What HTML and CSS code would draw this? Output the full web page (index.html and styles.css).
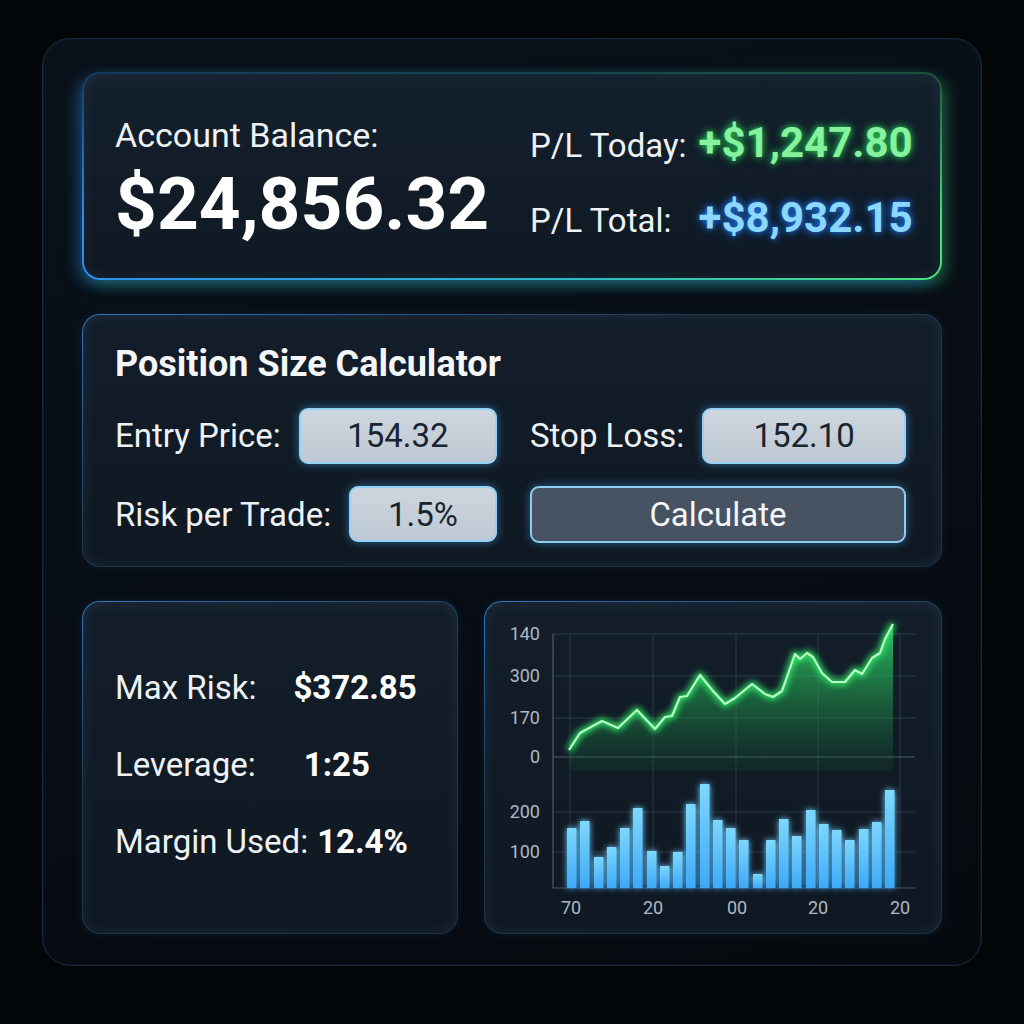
FILE: index.html
```html
<!DOCTYPE html>
<html lang="en">
<head>
    <meta charset="UTF-8">
    <meta name="viewport" content="width=device-width, initial-scale=1.0">
    <title>Trading Dashboard</title>
    <link rel="stylesheet" href="styles.css">
</head>
<body>
    <main class="dashboard">
        <!-- Saldo y P/L -->
        <section class="card balance-card">
            <div class="balance">
                <div class="balance-label">Account Balance:</div>
                <div class="balance-value">$24,856.32</div>
            </div>
            <dl class="pl">
                <dt>P/L Today:</dt>
                <dd class="pl-today">+$1,247.80</dd>
                <dt>P/L Total:</dt>
                <dd class="pl-total">+$8,932.15</dd>
            </dl>
        </section>

        <!-- Calculadora -->
        <section class="card calc-card">
            <h2 class="calc-title">Position Size Calculator</h2>
            <form class="calc-grid" id="calcForm">
                <label class="field">
                    <span>Entry Price:</span>
                    <input type="text" id="entryPrice" value="154.32">
                </label>
                <label class="field">
                    <span>Stop Loss:</span>
                    <input type="text" id="stopLoss" value="152.10">
                </label>
                <label class="field">
                    <span>Risk per Trade:</span>
                    <input type="text" id="riskPct" value="1.5%">
                </label>
                <button type="button" class="calc-btn">Calculate</button>
            </form>
        </section>

        <div class="bottom-row">
            <section class="card stats-card">
                <div class="stat"><span>Max Risk:</span><strong class="gap-risk">$372.85</strong></div>
                <div class="stat"><span>Leverage:</span><strong class="gap-lev">1:25</strong></div>
                <div class="stat"><span>Margin Used:</span><strong class="gap-margin">12.4%</strong></div>
            </section>

            <section class="card chart-card">
                <svg class="chart" viewBox="0 0 458 334" width="458" height="334">
                    <defs>
                        <filter id="blur" x="-20%" y="-20%" width="140%" height="140%">
                            <feGaussianBlur stdDeviation="3"/>
                        </filter>
                        <filter id="glow" x="-20%" y="-20%" width="140%" height="140%">
                            <feGaussianBlur stdDeviation="3" result="b"/>
                            <feMerge><feMergeNode in="b"/><feMergeNode in="SourceGraphic"/></feMerge>
                        </filter>
                        <linearGradient id="areaFill" gradientUnits="userSpaceOnUse" x1="0" y1="20" x2="0" y2="172">
                            <stop offset="0" stop-color="#2fd066" stop-opacity="0.95"/>
                            <stop offset="1" stop-color="#147038" stop-opacity="0.12"/>
                        </linearGradient>
                        <linearGradient id="barFill" x1="0" y1="0" x2="0" y2="1">
                            <stop offset="0" stop-color="#7dd8ff"/>
                            <stop offset="1" stop-color="#3ea9f7"/>
                        </linearGradient>
                    </defs>

                    <!-- rejilla -->
                    <g class="grid">
                        <line x1="69" y1="33" x2="431" y2="33"/>
                        <line x1="69" y1="75" x2="431" y2="75"/>
                        <line x1="69" y1="117" x2="431" y2="117"/>
                        <line x1="69" y1="211" x2="431" y2="211"/>
                        <line x1="69" y1="251" x2="431" y2="251"/>
                        <line x1="86" y1="33" x2="86" y2="287"/>
                        <line x1="169" y1="33" x2="169" y2="287"/>
                        <line x1="252" y1="33" x2="252" y2="287"/>
                        <line x1="334" y1="33" x2="334" y2="287"/>
                        <line x1="416" y1="33" x2="416" y2="287"/>
                    </g>
                    <g class="axis">
                        <line x1="69" y1="33" x2="69" y2="287"/>
                        <line x1="69" y1="156" x2="431" y2="156"/>
                        <line x1="69" y1="287" x2="431" y2="287"/>
                    </g>

                    <g class="labels y-labels">
                        <text x="56" y="39">140</text>
                        <text x="56" y="81">300</text>
                        <text x="56" y="123">170</text>
                        <text x="56" y="162">0</text>
                        <text x="56" y="217">200</text>
                        <text x="56" y="257">100</text>
                    </g>
                    <g class="labels x-labels">
                        <text x="87" y="313">70</text>
                        <text x="169" y="313">20</text>
                        <text x="253" y="313">00</text>
                        <text x="334" y="313">20</text>
                        <text x="416" y="313">20</text>
                    </g>

                    <!-- linea de equity -->
                    <polygon fill="url(#areaFill)" points="85,149 96,132 118,120 134,127 153,109 171,128 181,116 188,115 196,96 203,95 216,74 229,90 241,103 251,97 268,83 281,93 289,96 298,90 311,53 316,58 323,52 329,56 338,72 348,81 361,81 371,69 378,73 388,57 396,52 401,38 409,23 409,170 85,170"/>
                    <polyline class="line-glow" filter="url(#blur)" points="85,149 96,132 118,120 134,127 153,109 171,128 181,116 188,115 196,96 203,95 216,74 229,90 241,103 251,97 268,83 281,93 289,96 298,90 311,53 316,58 323,52 329,56 338,72 348,81 361,81 371,69 378,73 388,57 396,52 401,38 409,23"/>
                    <polyline class="line" points="85,149 96,132 118,120 134,127 153,109 171,128 181,116 188,115 196,96 203,95 216,74 229,90 241,103 251,97 268,83 281,93 289,96 298,90 311,53 316,58 323,52 329,56 338,72 348,81 361,81 371,69 378,73 388,57 396,52 401,38 409,23"/>

                    <!-- volumen -->
                    <g class="bars" fill="url(#barFill)" filter="url(#glow)">
                        <rect x="83" y="227" width="9.5" height="60"/>
                        <rect x="96" y="220" width="9.5" height="67"/>
                        <rect x="110" y="256" width="9.5" height="31"/>
                        <rect x="123" y="246" width="9.5" height="41"/>
                        <rect x="136" y="227" width="9.5" height="60"/>
                        <rect x="149" y="207" width="9.5" height="80"/>
                        <rect x="163" y="250" width="9.5" height="37"/>
                        <rect x="176" y="265" width="9.5" height="22"/>
                        <rect x="189" y="251" width="9.5" height="36"/>
                        <rect x="202" y="203" width="9.5" height="84"/>
                        <rect x="216" y="183" width="9.5" height="104"/>
                        <rect x="229" y="219" width="9.5" height="68"/>
                        <rect x="242" y="227" width="9.5" height="60"/>
                        <rect x="255" y="239" width="9.5" height="48"/>
                        <rect x="269" y="273" width="9.5" height="14"/>
                        <rect x="282" y="239" width="9.5" height="48"/>
                        <rect x="295" y="218" width="9.5" height="69"/>
                        <rect x="308" y="235" width="9.5" height="52"/>
                        <rect x="322" y="209" width="9.5" height="78"/>
                        <rect x="335" y="223" width="9.5" height="64"/>
                        <rect x="348" y="229" width="9.5" height="58"/>
                        <rect x="361" y="239" width="9.5" height="48"/>
                        <rect x="375" y="228" width="9.5" height="59"/>
                        <rect x="388" y="221" width="9.5" height="66"/>
                        <rect x="401" y="189" width="9.5" height="98"/>
                    </g>
                </svg>
            </section>
        </div>
    </main>
</body>
</html>
```

FILE: styles.css
```css
* {
    box-sizing: border-box;
}
body {
    margin: 0;
    padding: 38px 42px;
    background-color: #030609;
    font-family: Roboto, "Liberation Sans", Arial, sans-serif;
    color: #f1f4f7;
}

/* marco principal */
.dashboard {
    width: 940px;
    height: 928px;
    padding: 33px 39px 31px;
    border: 1px solid #172a3c;
    border-radius: 28px;
    background: linear-gradient(160deg, #0a1119, #060a0f);
    box-shadow: inset 0 0 0 1px rgba(40, 90, 140, 0.12);
    display: flex;
    flex-direction: column;
    gap: 34px;
}
.card {
    border: 1.5px solid transparent;
    border-radius: 18px;
    background:
        linear-gradient(180deg, #131e2a, #0f1822) padding-box,
        linear-gradient(160deg, #2f78bf, rgba(80, 130, 180, 0.35) 40%, rgba(80, 130, 180, 0.3)) border-box;
    box-shadow: inset 0 0 14px rgba(120, 170, 220, 0.12), 0 0 8px rgba(30, 80, 130, 0.2);
}

/* saldo */
.balance-card {
    height: 210px;
    padding: 41px 0 0 31px;
    display: grid;
    grid-template-columns: 415px auto;
    align-items: start;
    border: 2px solid transparent;
    background:
        linear-gradient(180deg, #14202d, #0f1923) padding-box,
        linear-gradient(180deg, rgba(12, 20, 29, 0.7), rgba(12, 20, 29, 0) 70%) border-box,
        linear-gradient(90deg, #2c8ff0, #2fb6c8 55%, #48e07a) border-box;
    box-shadow: inset 0 0 14px rgba(120, 170, 220, 0.1), -6px 5px 14px rgba(40, 140, 255, 0.35), 6px 5px 14px rgba(60, 220, 110, 0.3);
}
.balance-label {
    font-size: 34px;
    color: #eef2f5;
}
.balance-value {
    margin-top: 6px;
    font-size: 73px;
    font-weight: 700;
    color: #ffffff;
}
.pl {
    margin: 3px 0 0;
    display: grid;
    grid-template-columns: max-content max-content;
    justify-content: start;
    column-gap: 12px;
    row-gap: 26px;
    align-items: baseline;
}
.pl dt {
    font-size: 33px;
    color: #eef2f5;
}
.pl dd {
    margin: 0;
    font-size: 42px;
    font-weight: 700;
}
.pl-today {
    color: #86f29d;
    text-shadow: 0 0 6px rgba(40, 220, 90, 0.9), 0 0 12px rgba(40, 200, 90, 0.5);
}
.pl-total {
    color: #8ad8ff;
    text-shadow: 0 0 6px rgba(30, 120, 240, 1), 0 0 12px rgba(30, 110, 230, 0.6);
}

/* calculadora */
.calc-card {
    height: 256px;
    padding: 28px 35px 0 32px;
}
.calc-title {
    margin: 0 0 23px;
    font-size: 36px;
    font-weight: 700;
    color: #f4f6f8;
}
.calc-grid {
    display: grid;
    grid-template-columns: 382px minmax(0, 1fr);
    column-gap: 33px;
    row-gap: 22px;
}
.field {
    display: flex;
    align-items: center;
    gap: 18px;
    min-width: 0;
    font-size: 33px;
    color: #eef2f5;
}
.field span {
    white-space: nowrap;
}
.field input {
    flex: 1;
    width: 0;
    min-width: 0;
    height: 56px;
    padding: 0;
    border: 2px solid #93d2f4;
    border-radius: 9px;
    background: linear-gradient(180deg, #cdd6de, #bfc9d3);
    box-shadow: 0 0 10px rgba(70, 170, 240, 0.55);
    font-family: inherit;
    font-size: 33px;
    color: #1a2431;
    text-align: center;
}
.calc-btn {
    height: 57px;
    border: 2px solid #8fcdf0;
    border-radius: 9px;
    background-color: #475362;
    box-shadow: 0 0 10px rgba(70, 170, 240, 0.5);
    font-family: inherit;
    font-size: 33px;
    color: #f4f6f8;
    cursor: pointer;
}

/* fila inferior */
.bottom-row {
    display: flex;
    gap: 26px;
    height: 334px;
}
.stats-card {
    width: 376px;
    padding: 0 0 6px 32px;
    display: flex;
    flex-direction: column;
    justify-content: center;
    gap: 38px;
}
.stat {
    display: flex;
    font-size: 33px;
    color: #eef2f5;
}
.stat strong {
    font-weight: 700;
    color: #ffffff;
}
.gap-risk { margin-left: 37px; }
.gap-lev { margin-left: 48px; }
.gap-margin { margin-left: 9px; }

.chart-card {
    width: 458px;
    overflow: hidden;
}
.chart {
    display: block;
    margin: -1.5px;
}
.grid line {
    stroke: rgba(140, 170, 200, 0.2);
    stroke-width: 1;
}
.axis line {
    stroke: rgba(170, 195, 220, 0.38);
    stroke-width: 1.2;
}
.labels text {
    font-family: Roboto, "Liberation Sans", sans-serif;
    font-size: 18px;
    fill: #aeb9c5;
}
.y-labels text {
    text-anchor: end;
}
.x-labels text {
    text-anchor: middle;
}
.line-glow {
    fill: none;
    stroke: #2ee866;
    stroke-width: 6;
    stroke-linejoin: round;
}
.line {
    fill: none;
    stroke: #b8ffc6;
    stroke-width: 2.2;
    stroke-linejoin: round;
}
```
